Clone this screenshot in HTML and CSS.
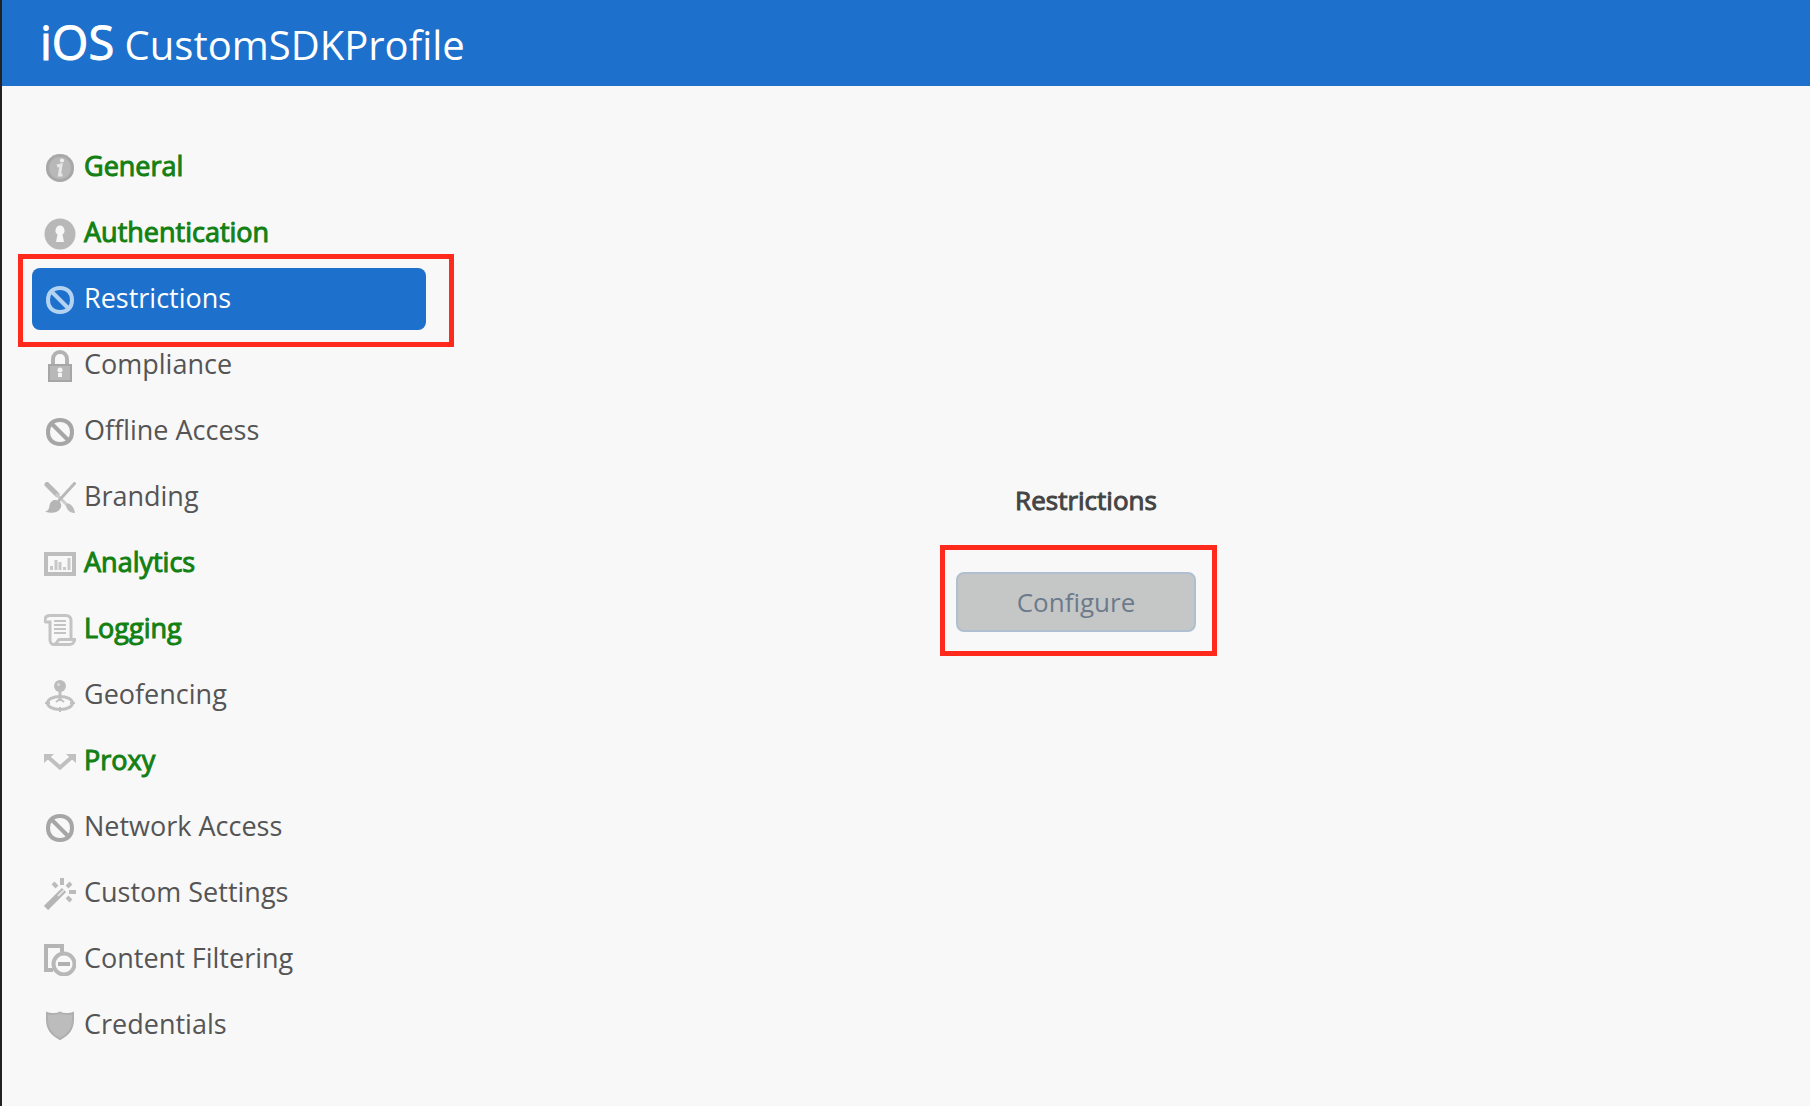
FILE: index.html
```html
<!DOCTYPE html>
<html lang="en">
<head>
<meta charset="utf-8">
<title>iOS CustomSDKProfile</title>
<link rel="stylesheet" href="styles.css">
</head>
<body>
<svg class="defs" aria-hidden="true">
  <symbol id="ban" viewBox="0 0 32 32"><path d="M16 4c4.500 0 6.500 1 9 3.500S28 12 28 16s-.5 6-3 8.500S20.500 28 16 28s-6.500-1-9-3.500S4 20 4 16s.5-6 3-8.500S11.500 4 16 4zM8 8l16 16" fill="none" stroke="currentColor" stroke-width="4"/></symbol>
</svg>
<header class="topbar">
  <h1 class="title"><span class="platform">iOS</span> <span class="profile">CustomSDKProfile</span></h1>
</header>
<div class="layout">
  <nav class="sidebar" aria-label="Profile sections">
    <a class="item set" href="#general"><svg class="icon" viewBox="0 0 32 32"><path d="M16 2c5 0 8 2 10.500 4.500S30 12 30 16s-1 7-3.500 9.500S20 30 16 30s-8-2-10.500-4.500S2 20 2 16s1-7 3.500-9.500S11 2 16 2z" fill="#a8a8a8"/><path d="M16 5a11 11 0 1 1 0 22 11 11 0 0 1 0-22z" fill="#b8b8b8"/><circle cx="18" cy="8.500" r="2.100" fill="#eee"/><path d="M13 14l4-1-1.500 10h3" fill="none" stroke="#e6e6e6" stroke-width="3"/></svg>General</a>
    <a class="item set" href="#authentication"><svg class="icon" viewBox="0 0 32 32"><circle cx="16" cy="16" r="15.500" fill="#b8b8b8"/><path d="M16 7.500a5 5 0 0 1 2.500 9l1.500 7.500h-8l1.500-7.500a5 5 0 0 1 2.500-9z" fill="#f7f7f7"/></svg>Authentication</a>
    <a class="item active" href="#restrictions" aria-current="page"><svg class="icon"><use href="#ban"/></svg>Restrictions</a>
    <a class="item" href="#compliance"><svg class="icon" viewBox="0 0 32 32"><path d="M9 15V9.500C9 5 12 2 16 2s7 3 7 7.500V15" fill="none" stroke="#b2b2b2" stroke-width="4"/><path d="M4 14h24v18H4z" fill="#a6a6a6"/><path d="M6 16h20v14H6z" fill="#b8b8b8"/><circle cx="16" cy="20" r="2.500" fill="#f4f4f4"/><path d="M14 23h4v4h-4z" fill="#f4f4f4"/></svg>Compliance</a>
    <a class="item" href="#offline"><svg class="icon"><use href="#ban"/></svg>Offline Access</a>
    <a class="item" href="#branding"><svg class="icon" viewBox="0 0 32 32"><path d="M3 2.500L13 12.500" stroke="#b8b8b8" stroke-width="5" stroke-linecap="round"/><path d="M12 12l12 12" stroke="#ccc" stroke-width="3"/><path d="M30.500 1.500L15 18.500" stroke="#b8b8b8" stroke-width="3" stroke-linecap="round"/><path d="M11 18c4 0 7 3 6 7-2 6-10 7-16 4.500 4-1 4-3 4.500-6 .5-3 2.500-5.500 5.500-5.500z" fill="#b5b5b5"/><path d="M22 22c3-2 8 2 9 9-5 0-9-3-9-9z" fill="#bbb"/></svg>Branding</a>
    <a class="item set" href="#analytics"><svg class="icon" viewBox="0 0 32 32"><path d="M2 6h28v20H2z" fill="none" stroke="#bdbdbd" stroke-width="4"/><path d="M7.500 18v4M12 12v10M16 14v8M20.500 19v3M25 10v12" stroke="#c8c8c8" stroke-width="3"/></svg>Analytics</a>
    <a class="item set" href="#logging"><svg class="icon" viewBox="0 0 32 32"><path d="M1 9V6c0-3 2-4.500 5-4.500h16c3 0 5 2 5 5V24M1 8h5v18c0 3 2 4.500 4 4.500h16c3 0 4-2 5-5H15c-1 0-2 5-5 5" fill="none" stroke="#c4c4c4" stroke-width="3"/><path d="M10 7h12M10 11h12M10 15h12M10 19h12" stroke="#c4c4c4" stroke-width="2"/></svg>Logging</a>
    <a class="item" href="#geofencing"><svg class="icon" viewBox="0 0 32 32"><ellipse cx="16" cy="23" rx="12.500" ry="6.500" fill="none" stroke="#c0c0c0" stroke-width="3"/><path d="M16 9v12" stroke="#c0c0c0" stroke-width="3"/><path d="M12 22l4-3 4 3M16 27v5M1 23h5M26 23h5" fill="none" stroke="#c0c0c0" stroke-width="2"/><circle cx="16" cy="6" r="6" fill="#bcbcbc"/><circle cx="14.500" cy="4.500" r="1.500" fill="#ddd"/></svg>Geofencing</a>
    <a class="item set" href="#proxy"><svg class="icon" viewBox="0 0 32 32"><path d="M4 11l12 10.500L28 11" fill="none" stroke="#c0c0c0" stroke-width="4"/><path d="M0 8h10L0 17zM32 8H22l10 9z" fill="#c0c0c0"/></svg>Proxy</a>
    <a class="item" href="#network"><svg class="icon"><use href="#ban"/></svg>Network Access</a>
    <a class="item" href="#custom"><svg class="icon" viewBox="0 0 32 32"><path d="M2 30L20 12" stroke="#b5b5b5" stroke-width="6"/><path d="M14 18l6-6" stroke="#e2e2e2" stroke-width="2"/><path d="M18 0v7M9 5l4 4M27 5l-4 4M25 14h7M23 19l4 4" stroke="#bbb" stroke-width="4"/></svg>Custom Settings</a>
    <a class="item" href="#filtering"><svg class="icon" viewBox="0 0 32 32"><path d="M9 26H2V2h16v7" fill="none" stroke="#b5b5b5" stroke-width="4"/><circle cx="20" cy="20" r="10.500" fill="#f8f8f8" stroke="#b8b8b8" stroke-width="4"/><path d="M14 20h12" stroke="#b0b0b0" stroke-width="4"/></svg>Content Filtering</a>
    <a class="item" href="#credentials"><svg class="icon" viewBox="0 0 32 32"><path d="M3 3c3 1.500 10 1.500 13-.5 3 2 10 2 13 .5v7c0 9-5 15-13 19C8 25 3 19 3 10z" fill="#bcbcbc" stroke="#b0b0b0" stroke-width="2"/></svg>Credentials</a>
  </nav>
  <main class="content">
    <h2 class="heading">Restrictions</h2>
    <div class="action"><button class="configure" type="button">Configure</button></div>
  </main>
</div>
</body>
</html>
```
FILE: styles.css
```css
* { box-sizing: border-box; }

body {
  margin: 0;
  min-height: 100vh;
  display: flex;
  flex-direction: column;
  border-left: 2px solid #222;
  background: #f8f8f8;
  color: #555;
  font-family: "Open Sans", sans-serif;
  font-size: 27px;
}

.defs {
  position: absolute;
  width: 0;
  height: 0;
}

.topbar {
  height: 86px;
  padding-left: 38px;
  background: #1d70cb;
  color: #fff;
}

.title {
  margin: 0;
  font-weight: 400;
  font-size: 40px;
  line-height: 84px;
  white-space: nowrap;
}

.platform {
  font-size: 47px;
  -webkit-text-stroke: 1px #fff;
}

.layout {
  flex: 1;
  display: flex;
}

.sidebar {
  width: 424px;
  flex: none;
  display: flex;
  flex-direction: column;
  gap: 4px;
  padding: 50px 0 44px 30px;
}

.item {
  display: flex;
  align-items: center;
  gap: 8px;
  height: 62px;
  padding: 0 0 3px 12px;
  border-radius: 8px;
  color: #555;
  text-decoration: none;
}

.icon {
  width: 32px;
  height: 32px;
  margin-top: 5px;
  flex: none;
  color: #a6a6a6;
}

.set {
  color: #138013;
  -webkit-text-stroke: 1px #138013;
}

.active {
  position: relative;
  background: #1d70cb;
  color: #fff;
}

.active .icon { color: #b4d2f2; }

.active::after,
.action::after {
  content: "";
  position: absolute;
  border: 5px solid #ff2a1c;
  pointer-events: none;
}

.active::after { inset: -14px -28px -17px -14px; }

.content {
  flex: 1;
  display: flex;
  flex-direction: column;
  align-items: center;
  justify-content: center;
  gap: 54px;
  padding: 0 84px 78px 0;
}

.heading {
  margin: 0;
  padding-left: 20px;
  color: #444;
  font-size: 26px;
  font-weight: 400;
  line-height: 36px;
  -webkit-text-stroke: 1px #444;
}

.action { position: relative; }

.action::after { inset: -27px -21px -24px -16px; }

.configure {
  display: block;
  width: 240px;
  height: 60px;
  border: 2px solid #afbfcf;
  border-radius: 8px;
  background: #c5c7c6;
  color: #6c7a8b;
  font: 26px "Open Sans", sans-serif;
}
```
